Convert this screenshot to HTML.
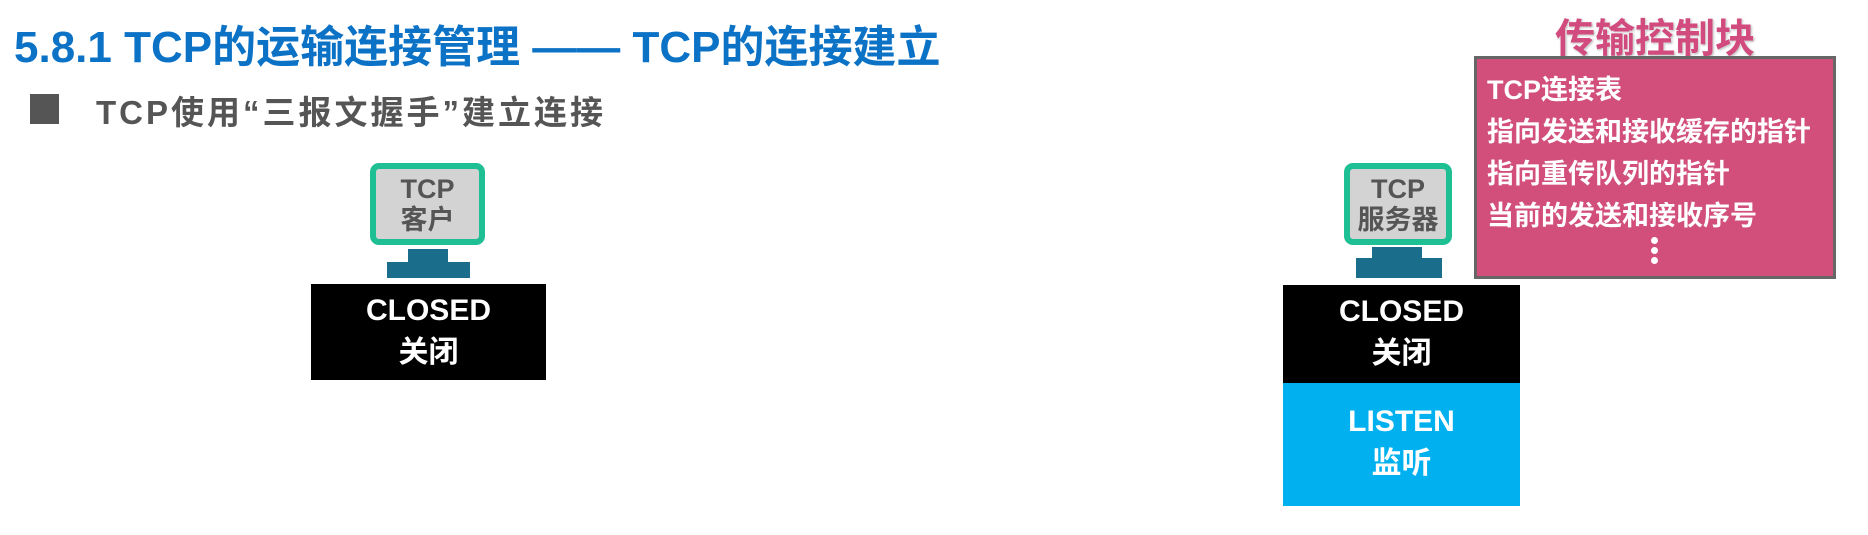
<!DOCTYPE html>
<html><head><meta charset="utf-8"><style>
body{margin:0;width:1868px;height:535px;background:#fff;position:relative;overflow:hidden;font-family:"Liberation Sans","Noto Sans CJK SC",sans-serif;font-weight:bold}
.a{position:absolute}
.mon{position:absolute;border:6px solid #1fbf94;border-radius:9px;background:#d3d3d3;box-sizing:border-box;color:#555;text-align:center;font-size:27px;line-height:31px;padding-top:5px}
.st{position:absolute;background:#1a6e8c}
.box{position:absolute;color:#fff;text-align:center;font-size:30px;line-height:42px;box-sizing:border-box}
</style></head><body>
<div class="a" style="left:14px;top:11px;font-size:44px;color:#0b72c6;white-space:nowrap;letter-spacing:0px">5.8.1 TCP的运输连接管理 —— TCP的连接建立</div>
<div class="a" style="left:30px;top:94px;width:29px;height:30px;background:#555"></div>
<div class="a" style="left:96px;top:86px;font-size:33px;color:#555;white-space:nowrap;letter-spacing:3px">TCP使用“三报文握手”建立连接</div>

<div class="mon" style="left:370px;top:163px;width:115px;height:82px">TCP<br>客户</div>
<div class="st" style="left:408px;top:249px;width:40px;height:15px"></div>
<div class="st" style="left:387px;top:262px;width:83px;height:16px"></div>
<div class="box" style="left:311px;top:284px;width:235px;height:96px;background:#000;padding-top:6px">CLOSED<br>关闭</div>

<div class="mon" style="left:1344px;top:163px;width:108px;height:82px">TCP<br>服务器</div>
<div class="st" style="left:1372px;top:247px;width:50px;height:14px"></div>
<div class="st" style="left:1356px;top:258px;width:86px;height:20px"></div>
<div class="box" style="left:1283px;top:285px;width:237px;height:98px;background:#000;padding-top:6px">CLOSED<br>关闭</div>
<div class="box" style="left:1283px;top:383px;width:237px;height:123px;background:#00b0ef;padding-top:18px">LISTEN<br>监听</div>

<div class="a" style="left:1555px;top:6px;font-size:40px;color:#d24b7e;text-shadow:0 0 3px #fff,1px 1px 2px #999">传输控制块</div>
<div class="a" style="left:1474px;top:56px;width:362px;height:223px;background:#d24f7c;border:3px solid #666;box-sizing:border-box;color:#fff;font-size:27px;line-height:42px;padding:10px 0 0 10px;white-space:nowrap">TCP连接表<br>指向发送和接收缓存的指针<br>指向重传队列的指针<br>当前的发送和接收序号</div>
<div class="a" style="left:1651px;top:237px;width:7px;height:7px;border-radius:4px;background:#fff"></div>
<div class="a" style="left:1651px;top:247px;width:7px;height:7px;border-radius:4px;background:#fff"></div>
<div class="a" style="left:1651px;top:257px;width:7px;height:7px;border-radius:4px;background:#fff"></div>
</body></html>
